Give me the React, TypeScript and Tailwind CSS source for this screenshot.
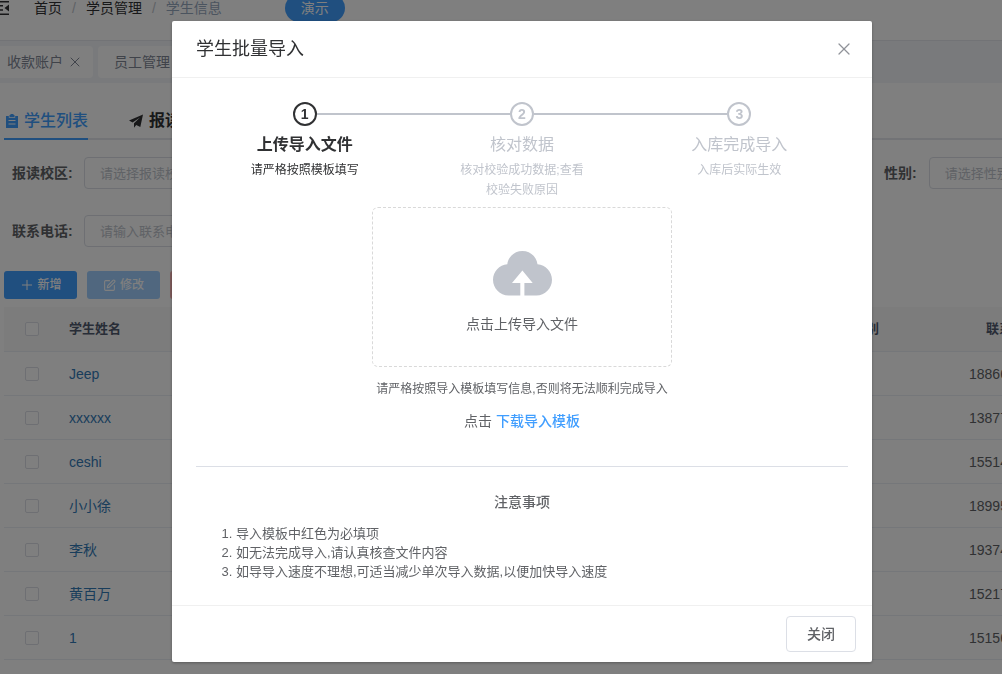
import { X, Plus, SquarePen } from "lucide-react";

const students = [
  { name: "Jeep", phone: "18866" },
  { name: "xxxxxx", phone: "13877" },
  { name: "ceshi", phone: "15514" },
  { name: "小小徐", phone: "18995" },
  { name: "李秋", phone: "19374" },
  { name: "黄百万", phone: "15217" },
  { name: "1", phone: "15156" },
];

const steps = [
  { title: "上传导入文件", text: "请严格按照模板填写" },
  { title: "核对数据", text: "核对校验成功数据;查看校验失败原因" },
  { title: "入库完成导入", text: "入库后实际生效" },
];

const notes = [
  "导入模板中红色为必填项",
  "如无法完成导入,请认真核查文件内容",
  "如导导入速度不理想,可适当减少单次导入数据,以便加快导入速度",
];

function FoldIcon() {
  return (
    <svg viewBox="0 0 20 14" className="h-3.5 w-5 shrink-0" fill="currentColor">
      <path d="M0 0h20v1.6H0zM0 4h14v1.6H0zM0 8.2h14v1.6H0zM0 12.4h20V14H0zM20 3.5v7L15.500 7z" />
    </svg>
  );
}

function ClipboardIcon() {
  return (
    <svg viewBox="0 0 12 14" className="h-3.5 w-3" fill="currentColor">
      <path
        fillRule="evenodd"
        d="M3.5 1h1V0h3v1h1v2h-5zM0 2h2.8v1.7h6.4V2H12v12H0zM2.5 6v1h7V6zM2.5 9.5v1h7v-1z"
      />
    </svg>
  );
}

function PlaneIcon() {
  return (
    <svg viewBox="0 0 14 14" className="h-3.5 w-3.5" fill="currentColor">
      <path d="M14 .5L0 6.5l3.6 1.9L11 3.5 5 9.3v4.4l2.2-2.8 4.1 2z" />
    </svg>
  );
}

function CloudIcon() {
  return (
    <svg viewBox="0 0 59 45" className="h-[45px] w-[59px]" fill="#c0c4cc">
      <path d="M14.3 13.2C15.2 5.6 21.6 0 29.4 0s14.2 5.6 15.1 13.2C52.6 13.8 59 20.6 59 28.8c0 8.6-6.9 15.7-15.6 15.7H31.4V32h8.3L29.4 19.6 19 32h8.3v12.5H15.6C6.9 44.5 0 37.4 0 28.8c0-8.2 6.3-15 14.3-15.600z" />
    </svg>
  );
}

function Header() {
  return (
    <header className="h-[51px] border-b border-[#e4e7ed] bg-white shadow-sm">
      <div className="flex h-9 items-center text-sm text-[#303133]">
        <button aria-label="收起菜单" className="-ml-[11px]">
          <FoldIcon />
        </button>
        <nav className="ml-[25px] flex items-center gap-2.5">
          <a href="#">首页</a>
          <span className="text-[#c0c4cc]">/</span>
          <a href="#">学员管理</a>
          <span className="text-[#c0c4cc]">/</span>
          <span className="text-[#97a8be]">学生信息</span>
        </nav>
        <button className="ml-[63px] h-7 rounded-full bg-[#409eff] px-4 text-white">演示</button>
      </div>
    </header>
  );
}

function PageTabs() {
  return (
    <div className="flex h-[42px] items-center gap-[5px] bg-[#f2f5f9] text-sm text-[#808695]">
      <div className="flex h-8 w-[93px] items-center gap-1 rounded-r-sm bg-white pl-[7px]">
        收款账户
        <button aria-label="关闭">
          <X size={16} strokeWidth={1.5} />
        </button>
      </div>
      <div className="flex h-8 items-center gap-1 rounded-sm bg-white px-4">
        员工管理
        <button aria-label="关闭">
          <X size={16} strokeWidth={1.5} />
        </button>
      </div>
    </div>
  );
}

function SearchForm() {
  return (
    <form className="space-y-[26px] pl-2 text-sm text-[#606266]">
      <div className="flex items-center">
        <div className="flex w-[872px] shrink-0 items-center gap-3">
          <label htmlFor="campus" className="w-15 font-bold whitespace-nowrap">报读校区:</label>
          <input id="campus" placeholder="请选择报读校区" className="h-8 w-60 rounded border border-[#dcdfe6] px-[15px] text-[13px] placeholder:text-[#c0c4cc]" />
        </div>
        <div className="flex shrink-0 items-center gap-3">
          <label htmlFor="gender" className="font-bold">性别:</label>
          <input id="gender" placeholder="请选择性别" className="h-8 w-60 rounded border border-[#dcdfe6] px-[15px] text-[13px] placeholder:text-[#c0c4cc]" />
        </div>
      </div>
      <div className="flex items-center gap-3">
        <label htmlFor="phone" className="w-15 font-bold whitespace-nowrap">联系电话:</label>
        <input id="phone" placeholder="请输入联系电话" className="h-8 w-60 rounded border border-[#dcdfe6] px-[15px] text-[13px] placeholder:text-[#c0c4cc]" />
      </div>
    </form>
  );
}

function StudentTable() {
  return (
    <table className="mt-2 w-full min-w-[1081px] table-fixed text-sm text-[#606266]">
      <thead>
        <tr className="h-11 border-b border-[#ebeef5] bg-[#f8f8f9] text-[13px] text-[#515a6e]">
          <th className="w-[55px]">
            <input type="checkbox" aria-label="全选" className="mx-auto block size-3.5 appearance-none rounded-xs border border-[#dcdfe6] bg-white" />
          </th>
          <th className="px-2.5 pt-0.5 text-left">学生姓名</th>
          <th className="w-[146px] pt-0.5">性别</th>
          <th className="w-[146px] pt-0.5">联系电话</th>
        </tr>
      </thead>
      <tbody>
        {students.map((s) => (
          <tr key={s.name} className="h-11 border-b border-[#ebeef5]">
            <td className="pt-0.5">
              <input type="checkbox" aria-label={s.name} className="mx-auto block size-3.5 appearance-none rounded-xs border border-[#dcdfe6] bg-white" />
            </td>
            <td className="px-2.5 pt-0.5">
              <a href="#" className="text-[#337ab7]">{s.name}</a>
            </td>
            <td />
            <td className="pt-0.5 pl-[30px]">{s.phone}</td>
          </tr>
        ))}
      </tbody>
    </table>
  );
}

function StudentPage() {
  return (
    <div className="-mt-2.5 bg-white">
      <Header />
      <PageTabs />
      <main className="pl-1">
        <div className="flex h-[57px] items-end gap-[41px] border-b-2 border-[#e4e7ed] font-medium text-[#303133]">
          <a href="#" className="-mb-0.5 flex h-9 items-center gap-1.5 border-b-2 border-[#409eff] pl-0.5 text-[#409eff]">
            <ClipboardIcon />
            学生列表
          </a>
          <a href="#" className="-mb-0.5 flex h-9 items-center gap-1.5 border-b-2 border-transparent font-bold">
            <PlaneIcon />
            报读列表
          </a>
        </div>
        <div className="pt-[17px]">
          <SearchForm />
        </div>
        <div className="mt-6 flex gap-2.5 text-xs font-medium text-white">
          <button className="flex h-7 w-[73px] items-center justify-center gap-0.5 rounded-[3px] bg-[#409eff]">
            <Plus size={16} strokeWidth={1.5} />
            新增
          </button>
          <button className="flex h-7 w-[73px] items-center justify-center gap-1 rounded-[3px] bg-[#a0cfff]">
            <SquarePen size={13} />
            修改
          </button>
          <button className="h-7 w-[73px] rounded-[3px] bg-[#fab6b6]">删除</button>
        </div>
        <StudentTable />
      </main>
    </div>
  );
}

function Steps() {
  return (
    <ol className="flex text-center">
      {steps.map((step, i) => (
        <li key={step.title} className={i === 0 ? "flex-1 text-[#303133]" : "flex-1 text-[#c0c4cc]"}>
          <div className="flex items-center">
            <span className={i === 0 ? "h-0.5 flex-1" : "h-0.5 flex-1 bg-[#c0c4cc]"} />
            <span className="flex size-6 items-center justify-center rounded-full border-2 border-current text-sm font-bold">{i + 1}</span>
            <span className={i === 2 ? "h-0.5 flex-1" : "h-0.5 flex-1 bg-[#c0c4cc]"} />
          </div>
          <div className={i === 0 ? "text-base/[38px] font-bold" : "text-base/[38px]"}>{step.title}</div>
          <div className="-mt-1 px-[20%] text-xs/5">{step.text}</div>
        </li>
      ))}
    </ol>
  );
}

function ImportDialog() {
  return (
    <section role="dialog" aria-label="学生批量导入" className="w-[700px] rounded-xs bg-white text-[#606266] shadow-[0_1px_3px_rgba(0,0,0,0.3)]">
      <header className="flex h-[57px] items-center justify-between border-b border-[#f0f0f0] px-6">
        <h2 className="text-lg text-[#303133]">学生批量导入</h2>
        <button aria-label="关闭窗口" className="-mr-1.5 text-[#909399]">
          <X size={20} strokeWidth={1.5} />
        </button>
      </header>
      <div className="px-6 pt-6">
        <Steps />
        <button className="mx-auto mt-[7px] flex h-40 w-[300px] flex-col items-center rounded-md border border-dashed border-[#d9d9d9] pt-[43px] text-sm">
          <CloudIcon />
          <span className="mt-[18px]">点击上传导入文件</span>
        </button>
        <p className="mt-2.5 text-center text-xs/6">请严格按照导入模板填写信息,否则将无法顺利完成导入</p>
        <p className="mt-2 text-center text-sm/6">
          点击 <a href="#" className="font-medium text-[#409eff]">下载导入模板</a>
        </p>
        <hr className="mt-[33px] border-[#dcdfe6]" />
        <h3 className="mt-[23px] text-center text-sm/6 font-medium">注意事项</h3>
        <ol className="mt-2.5 list-decimal pb-6 pl-10 text-[13px]/[19px]">
          {notes.map((note) => (
            <li key={note}>{note}</li>
          ))}
        </ol>
      </div>
      <footer className="flex justify-end border-t border-[#f0f0f0] px-4 py-2.5">
        <button className="h-9 rounded border border-[#dcdfe6] px-5 text-sm font-medium">关闭</button>
      </footer>
    </section>
  );
}

export default function App() {
  return (
    <div className="h-screen overflow-hidden bg-white font-['Liberation_Sans','Noto_Sans_CJK_SC',sans-serif]">
      <StudentPage />
      <div className="fixed inset-0 flex items-start justify-center bg-black/50 pt-[21px] pl-[42px]">
        <ImportDialog />
      </div>
    </div>
  );
}
